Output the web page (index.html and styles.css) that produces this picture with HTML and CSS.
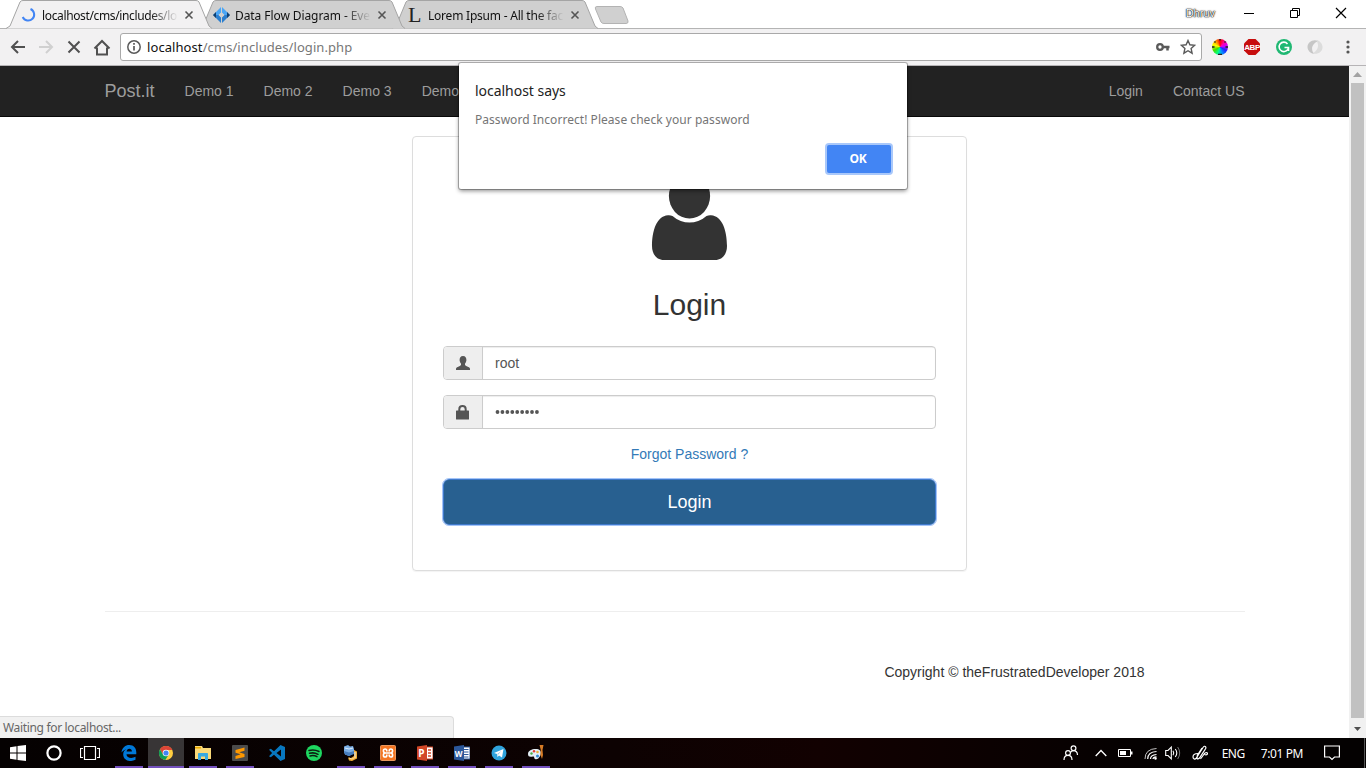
FILE: index.html
```html
<!DOCTYPE html>
<html lang="en">
<head>
<meta charset="utf-8">
<title>Login</title>
<link rel="stylesheet" href="styles.css">
</head>
<body>
<div class="screen">
  <header class="tabstrip">
    <div class="tab tab-active">
      <svg class="tab-shape" width="206" height="29"><path d="M0 28.5 L4 26 L14 2 Q15 .5 17 .5 H190 Q192 .5 193 2 L203 26 L206 28.5" fill="#f2f1f2" stroke="#a5a5a5"/></svg>
      <svg class="favicon" width="16" height="16" viewBox="0 0 16 16"><path d="M10 2A6 6 0 1 1 2.200 10" fill="none" stroke="#4285f4" stroke-width="2"/></svg>
      <span class="tab-title title-one">localhost/cms/includes/login.php</span>
      <svg class="tab-close" width="10" height="10"><path d="M1.500 1.500l7 7m0-7l-7 7" stroke="#555" stroke-width="1.600"/></svg>
    </div>
    <div class="tab tab-second">
      <svg class="tab-shape" width="206" height="29"><path d="M0 28.500L4 26L14 2Q15 .5 17 .5H190Q192 .5 193 2L203 26L206 28.500" fill="#d0d0d0" stroke="#a5a5a5"/></svg>
      <svg class="favicon" width="17" height="16" viewBox="0 0 17 16"><path d="M3 5L8 0v5.500L5.500 8H0zM14 5L9 0v5.500L11.500 8H17z" fill="#4ba6f5"/><path d="M3 11l5 5v-5.500L5.500 8H0zM14 11l-5 5v-5.500L11.500 8H17z" fill="#2c7fcf"/><path d="M0 8l3-3v6zM17 8l-3-3v6z" fill="#12406f"/><path d="M8.500 5.500L11 8l-2.500 2.500L6 8z" fill="#d0d0d0"/></svg>
      <span class="tab-title title-two">Data Flow Diagram - Everything</span>
      <svg class="tab-close" width="10" height="10"><path d="M1.500 1.500l7 7m0-7l-7 7" stroke="#555" stroke-width="1.600"/></svg>
    </div>
    <div class="tab">
      <svg class="tab-shape" width="206" height="29"><path d="M0 28.500L4 26L14 2Q15 .5 17 .5H190Q192 .5 193 2L203 26L206 28.500" fill="#d0d0d0" stroke="#a5a5a5"/></svg>
      <span class="favicon letter">L</span>
      <span class="tab-title title-three">Lorem Ipsum - All the facts</span>
      <svg class="tab-close" width="10" height="10"><path d="M1.500 1.500l7 7m0-7l-7 7" stroke="#555" stroke-width="1.600"/></svg>
    </div>
    <svg class="new-tab" width="36" height="18"><path d="M3 .5H26Q28 .5 29 2L34 15Q34.500 17.500 32 17.500H10Q8 17.500 7 16L1.500 3Q.5 .5 3 .5Z" fill="#d0d0d0" stroke="#b3b3b3"/></svg>
    <div class="window-controls">
      <span class="profile">Dhruv</span>
      <svg width="12" height="12"><path d="M1 6.500h10" stroke="#000"/></svg>
      <svg width="12" height="12"><path d="M1.500 3.500h7v7h-7zM3.500 3.500v-2h7v7h-2" fill="none" stroke="#000"/></svg>
      <svg width="12" height="12"><path d="M1 1l10 10M11 1L1 11" stroke="#000" stroke-width="1.200"/></svg>
    </div>
  </header>

  <div class="toolbar">
    <svg width="16" height="16"><path d="M15 8H2M8 2L2 8l6 6" fill="none" stroke="#505050" stroke-width="2"/></svg>
    <svg width="16" height="16"><path d="M1 8h13M8 2l6 6-6 6" fill="none" stroke="#d0d0d0" stroke-width="2"/></svg>
    <svg width="16" height="16"><path d="M2.500 2.500l11 11m0-11l-11 11" stroke="#505050" stroke-width="2"/></svg>
    <svg class="home" width="18" height="17"><path d="M1.500 9.500L9 2l7.500 7.500M4 8.500v7h10v-7" fill="none" stroke="#505050" stroke-width="2"/></svg>
    <div class="address">
      <svg width="16" height="16"><circle cx="8" cy="8" r="6.200" fill="none" stroke="#5a5a5a" stroke-width="1.500"/><path d="M8 7v4.500M8 4v1.700" stroke="#5a5a5a" stroke-width="1.700"/></svg>
      <span class="url"><b>localhost</b>/cms/includes/login.php</span>
      <svg class="key" width="16" height="12"><circle cx="5" cy="6" r="2.800" fill="none" stroke="#5a5a5a" stroke-width="2.300"/><path d="M8 6h6.500M12.500 6v3.500" fill="none" stroke="#5a5a5a" stroke-width="2.500"/></svg>
      <svg width="16" height="16"><path d="M8 1.500l1.900 4.300 4.800.5-3.600 3.200 1 4.700L8 11.700l-4.100 2.500 1-4.700L1.300 6.300l4.800-.5z" fill="none" stroke="#5a5a5a" stroke-width="1.400"/></svg>
    </div>
    <div class="extensions">
      <span class="wheel"><svg width="16" height="16"><path d="M0 8h2.500M13.500 8H16M8 0v1.500M2.500 2.500l1 1M13.500 2.500l-1 1M6 15.500h4" stroke="#222" stroke-width="1.500"/></svg></span>
      <svg width="18" height="18"><path d="M5.500 1h7L17 5.500v7L12.500 17h-7L1 12.500v-7z" fill="#c70d0d"/><text x="9" y="11.900" text-anchor="middle" class="abp">ABP</text></svg>
      <svg width="16" height="16"><circle cx="8" cy="8" r="8" fill="#20b873"/><path d="M11.500 4.900A4.700 4.700 0 1 0 12.500 8.500H8.500M12.500 8.500v3.500" fill="none" stroke="#fff" stroke-width="1.600"/></svg>
      <svg width="16" height="16"><path d="M11.500 2C6-.5.5 3 .5 8c0 3.500 3 6.500 7 7-3.500-3-4-10 4-13z" fill="#c6c6c6"/><path d="M5 14.500c6 1.500 11-2 10.500-7C15 4 12.500 1.500 9 1c3 3.500 3.500 10.500-4 13.500z" fill="#dcdcdc"/></svg>
      <svg class="menu" width="4" height="16"><circle cx="2" cy="3" r="1.600" fill="#555"/><circle cx="2" cy="8" r="1.600" fill="#555"/><circle cx="2" cy="13" r="1.600" fill="#555"/></svg>
    </div>
  </div>

  <div class="viewport">
    <div class="page">
      <nav class="navbar">
        <div class="container nav-row">
          <a class="brand">Post.it</a>
          <a>Demo 1</a><a>Demo 2</a><a>Demo 3</a><a>Demo 4</a>
          <a class="nav-right">Login</a><a>Contact US</a>
        </div>
      </nav>
      <main class="container">
        <section class="panel">
          <svg class="avatar" width="77" height="92" viewBox="0 0 77 92"><ellipse cx="38.500" cy="27" rx="20.600" ry="22.500" fill="#333"/><path d="M17 46.200C18.500 46 20 46.300 21.500 47C32 55.800 45 55.800 55.500 47C57 46.300 58.500 46 60 46.200C71.500 47 76 62 76 77C76 85 71.500 91 64 91H13C5.500 91 1 85 1 77C1 62 5.500 47 17 46.200Z" fill="#333"/></svg>
          <h2>Login</h2>
          <div class="input-group">
            <span class="addon"><svg width="14" height="14"><path d="M7 0C4.500 0 3.600 1.700 3.600 4c0 1.500.7 2.700 1.500 3.700 0 1.300-.3 1.700-1.300 2.200C1.500 10.800 0 11.500 0 12.700V14h14v-1.300c0-1.200-1.500-1.900-3.800-2.800-1-.5-1.300-.9-1.300-2.200.8-1 1.500-2.200 1.500-3.700C10.400 1.700 9.500 0 7 0z" fill="#555"/></svg></span>
            <span class="field">root</span>
          </div>
          <div class="input-group">
            <span class="addon"><svg width="14" height="15"><path d="M3.300 6V4.200Q3.300 1 6.500 1T9.700 4.200V6" fill="none" stroke="#555" stroke-width="2"/><rect y="5.500" width="13" height="9" rx=".6" fill="#555"/></svg></span>
            <span class="field"><svg width="46" height="6"><path d="M2.500 3h41" stroke="#555" stroke-width="3.800" stroke-linecap="round" stroke-dasharray="0 4.930"/></svg></span>
          </div>
          <a class="forgot">Forgot Password ?</a>
          <button class="submit">Login</button>
        </section>
        <footer class="footer">Copyright © theFrustratedDeveloper 2018</footer>
      </main>
      <div class="status">Waiting for localhost...</div>
    </div>
    <div class="scrollbar">
      <svg width="17" height="17"><path d="M4 11l4.500-5 4.500 5z" fill="#a3a3a3"/></svg>
      <span class="thumb"></span>
      <svg width="17" height="20"><path d="M5 9h7l-3.500 4z" fill="#505050"/></svg>
    </div>
  </div>

  <div class="dialog">
    <div class="dialog-title">localhost says</div>
    <div class="dialog-text">Password Incorrect! Please check your password</div>
    <button class="ok">OK</button>
  </div>

  <div class="taskbar">
    <span class="sys"><svg width="16" height="16"><path d="M0 2.300L6.500 1.300V7.500H0zM7.500 1.100L16 0v7.500H7.500zM0 8.500h6.500v6.200L0 13.700zM7.500 8.500H16V16l-8.500-1.100z" fill="#fff"/></svg></span>
    <span class="sys"><svg width="16" height="16"><circle cx="8" cy="8" r="6.600" fill="none" stroke="#fff" stroke-width="2.200"/></svg></span>
    <span class="sys"><svg width="20" height="16"><path d="M4.500 1.500h11v13h-11zM3 3.500H.5v9H3M17 3.500h2.500v9H17" fill="none" stroke="#fff" stroke-width="1.200"/></svg></span>
    <span class="app running first"><svg width="16" height="16"><path d="M.5 7.500C1 2.500 4.500 0 8.200 0 13 0 15.300 3.500 15.300 7.300V9.200H5.500c.1 4 5.500 4.600 9 2.600v3C8.500 17.800 2.200 15 2.200 9.500c0-3 1.400-4.600 3.300-5.300C3.500 4.700 1.500 6 .5 7.500zM5.600 6.500h5.300C10.900 4.700 9.800 3.800 8.300 3.800 6.800 3.800 5.800 5 5.600 6.500z" fill="#0078d7"/></svg></span>
    <span class="app running current"><svg width="16" height="16"><circle cx="8" cy="8" r="7" fill="#ffcd40"/><path d="M2 4.300A7 7 0 0 1 14.300 5H8L5 9.700z" fill="#db4437"/><path d="M2 4.300A7 7 0 0 0 7.300 15L10.500 10 5 9.500z" fill="#0f9d58"/><circle cx="8" cy="8" r="3.300" fill="#fff"/><circle cx="8" cy="8" r="2.600" fill="#4285f4"/></svg></span>
    <span class="app running"><svg width="16" height="16"><path d="M0 1h7l1 2h8v11H0z" fill="#f9d978"/><path d="M0 2h6v1.500H0z" fill="#e8a900"/><path d="M3 15V8.500Q3 8 4 8h8q1 0 1 .5V15h-3v-3.500H6V15z" fill="#37a9e1"/></svg></span>
    <span class="app running"><svg width="16" height="16"><rect width="16" height="16" rx="1" fill="#4b4b4b"/><path d="M12.500 2.500v3.200L7.200 7.300l5.300 1.600v3L3.500 14v-3l5.200-1.800-5.200-1.500V4.900z" fill="#ff9800"/></svg></span>
    <span class="app"><svg width="16" height="16"><path d="M11.500 0L16 2v12l-4.500 2L5 9.700 1.800 12.300 0 11.300 3.100 8 0 4.700l1.800-1L5 6.300zM12 4.500L7.500 8l4.500 3.500z" fill="#0877bf"/></svg></span>
    <span class="app"><svg width="16" height="16"><circle cx="8" cy="8" r="8" fill="#1ed760"/><path d="M3 5.500q5-1.500 10 1M3.500 8.300q4.500-1.200 8.500 1M4 10.900q4-1 7 .8" fill="none" stroke="#0b1f11" stroke-width="1.500" stroke-linecap="round"/></svg></span>
    <span class="app running"><svg width="16" height="16"><path d="M1 1.500L5 0l2 1.500 3-.5 1 3v4L6 11 2 9.500 1 7z" fill="#7baee4"/><path d="M1 6l5 1.500L11 6v3l-5 2-4-1.500z" fill="#467dbe"/><path d="M11 5l3 1.500v7L9 16l-3-.5-1-3 3 .5 3-2z" fill="#efac35"/><path d="M2 3l4 1 4-1M12 7v5" stroke="#d8ecff" fill="none"/><path d="M6 13l3 1 4-2" stroke="#ffd993" fill="none"/></svg></span>
    <span class="app running"><svg width="16" height="16"><rect x=".5" y=".5" width="15" height="15" rx="1" fill="#f37623" stroke="#e8975e"/><path d="M6.800 6.500V5.800Q6.800 4 5.100 4T3.400 5.800Q3.400 8 5.500 8H10.500Q12.600 8 12.600 5.800 12.600 4 10.900 4T9.200 5.800V6.500M5.500 8Q3.400 8 3.400 10.200 3.400 12 5.100 12T6.800 10.200V9.500M10.500 8Q12.600 8 12.600 10.200 12.600 12 10.900 12T9.200 10.200V9.500" fill="none" stroke="#fff" stroke-width="1.600"/></svg></span>
    <span class="app running"><svg width="16" height="16"><path d="M7 2h9v12H7z" fill="#fff" stroke="#d24726"/><path d="M11 5h3M11 8h3M11 11h3" stroke="#d24726" stroke-width="1.300"/><path d="M0 1.500L10 0v16L0 14.500z" fill="#d24726"/><text class="office" x="1.300" y="12">P</text></svg></span>
    <span class="app running"><svg width="16" height="16"><path d="M7 2h9v12H7z" fill="#fff" stroke="#2b579a"/><path d="M10 4.500h4.500M10 7h4.500M10 9.500h4.500M10 12h4.500" stroke="#2b579a"/><path d="M0 1.500L10 0v16L0 14.500z" fill="#2b579a"/><text class="office word" x=".8" y="11.500">W</text></svg></span>
    <span class="app running"><svg width="16" height="16"><circle cx="8" cy="8" r="7.500" fill="#2fa3dc"/><path d="M3 8l9.500-4-1.500 8.500-3-2-1.500 1.500-.4-3z" fill="#fff"/><path d="M6.200 9l4-3-3 3.700" fill="#9bc6df"/></svg></span>
    <span class="app running"><svg width="16" height="16"><path d="M0 9C0 5 5 3.500 9 4c3.500.5 4.500 3 3.500 6-1 3.500-4 5-5.500 4-1.500-1 0-2.500-2-2.500C2 12 0 12 0 9z" fill="#e4eef5"/><circle cx="3.500" cy="8.500" r="1.200" fill="#49ad47"/><circle cx="6" cy="6.300" r="1.200" fill="#e23b32"/><circle cx="9.500" cy="7" r="1.300" fill="#ebb53a"/><circle cx="9.500" cy="11" r="1.500" fill="#3289d5"/><path d="M11.500 0h4l-1 5 .5 5-1 4-1.500-4 .3-5z" fill="#d77b25"/></svg></span>
    <div class="tray">
      <svg width="16" height="16"><g fill="none" stroke="#fff" stroke-width="1.200"><circle cx="10.500" cy="3.300" r="2.400"/><circle cx="5" cy="8" r="2.400"/><path d="M1 15q0-4.600 4-4.600T9 15M7.500 7.500Q8.500 5.700 10.500 5.700 14.300 5.700 14.500 10"/></g></svg>
      <svg width="12" height="16"><path d="M.7 11L6 5.500l5.300 5.500" fill="none" stroke="#fff" stroke-width="1.300"/></svg>
      <svg width="16" height="16"><path d="M1.500 4.500h12v7h-12z" fill="none" stroke="#fff"/><path d="M3 6h6v4H3zM14 6.500h1.500v3H14z" fill="#fff"/></svg>
      <svg width="14" height="16"><g fill="none" stroke="#fff"><path d="M1 14Q1 4 12.500 3.500" opacity=".75"/><path d="M3.700 14q0-7 8.800-7.500M6.500 14q0-4 6-4.500M9 14q0-2 3.500-2.200" stroke-width="1.200"/></g><circle cx="11.500" cy="13.500" r="1.200" fill="#fff"/></svg>
      <svg width="16" height="16"><path d="M.7 5.500H3l3.300-3.300v11.600L3 10.500H.7z" fill="none" stroke="#fff" stroke-width="1.100"/><path d="M8 5.800q1.500 2.200 0 4.400M10.300 4q3 4 0 8" fill="none" stroke="#fff" stroke-width="1.100"/><path d="M12.700 2q4 6 0 12" fill="none" stroke="#777"/></svg>
      <svg width="16" height="16"><path d="M6 8.500C2 8.500 1 10 1 12s2 2.500 3 1.500l7-11q1.500-2 2.500-.8t-.5 3L7.500 13q-1.500 1.500-2.500.5l.3-3L10 3M8.500 14q3-4 4-5.500 2.500-2 3 0-.5 2-3 1" fill="none" stroke="#fff" stroke-width="1.200"/></svg>
      <span class="lang">ENG</span>
      <span class="clock">7:01 PM</span>
      <svg width="16" height="16"><path d="M.6 1h14.800v11H10.500L8 14.500 5.500 12H.6z" fill="none" stroke="#fff" stroke-width="1.200"/></svg>
    </div>
  </div>
</div>
</body>
</html>
```
FILE: styles.css
```css
* { box-sizing: border-box; }
body { margin: 0; overflow: hidden; }
svg { display: block; flex: none; }
.screen {
  position: relative;
  display: flex;
  flex-direction: column;
  width: 1366px;
  height: 768px;
  background: #fff;
  font-family: "Noto Sans", "Open Sans", sans-serif;
}

/* browser tabs */
.tabstrip {
  display: flex;
  height: 29px;
  flex: none;
  padding-left: 6px;
  border-bottom: 1px solid #b4b4b4;
}
.tab {
  position: relative;
  display: flex;
  align-items: center;
  width: 206px;
  height: 29px;
  margin-right: -13px;
  padding: 1px 18px 0 14px;
  flex: none;
}
.tab-second { z-index: 1; }
.tab-active { z-index: 2; }
.tab-shape { position: absolute; left: 0; top: 0; }
.favicon, .tab-title, .tab-close { position: relative; }
.favicon { width: 17px; flex: none; }
.letter { padding-left: 2px; font: 22px/24px "Liberation Serif", serif; color: #222; }
.tab-title {
  width: 135px;
  margin-left: 5px;
  margin-right: 7px;
  overflow: hidden;
  white-space: nowrap;
  font-size: 12px;
  color: #111;
  mask-image: linear-gradient(to right, #000 108px, transparent 136px);
}
.title-one { letter-spacing: -0.36px; }
.title-two { letter-spacing: -0.08px; }
.title-three { letter-spacing: -0.22px; }
.new-tab { margin: 6px 0 0 9px; }
.window-controls {
  display: flex;
  align-items: center;
  gap: 34px;
  height: 26px;
  margin-left: auto;
  padding-right: 19px;
}
.profile {
  margin-right: -6px;
  font: 11px/14px "Liberation Sans", Arial, sans-serif;
  color: #fff;
  text-shadow: 0 0 1px #000, 0 0 1px #000, 0 0 2px #333;
}

/* address bar */
.toolbar {
  display: flex;
  align-items: center;
  gap: 12px;
  height: 37px;
  flex: none;
  padding: 0 16px 0 10px;
  background: #f2f1f2;
  border-bottom: 1px solid #b6b4b6;
}
.home { margin-left: -1px; }
.address {
  display: flex;
  align-items: center;
  width: 1082px;
  height: 28px;
  flex: none;
  margin: 0 0 0 -3px;
  padding: 0 5px;
  background: #fff;
  border: 1px solid #a9a9a9;
  border-radius: 3px;
}
.url { margin-left: 5px; font-size: 13px; letter-spacing: 0.08px; color: #777; }
.url b { font-weight: normal; color: #111; }
.key { margin-left: auto; margin-right: 9px; }
.extensions { display: flex; align-items: center; gap: 15px; margin-left: -2px; }
.menu { margin-left: 8px; }
.wheel {
  width: 16px;
  height: 16px;
  border-radius: 50%;
  background: conic-gradient(#f00, #f0a 45deg, #c0f 80deg, #22f 120deg, #09f 165deg, #0f8 200deg, #4d0 240deg, #ff0 290deg, #f80 330deg, #f00);
}
.abp { font: bold 8px "Liberation Sans", Arial, sans-serif; letter-spacing: -0.4px; fill: #fff; }

/* web page */
.viewport { display: flex; height: 672px; flex: none; }
.page {
  position: relative;
  width: 1349px;
  font: 14px/20px "Liberation Sans", Arial, sans-serif;
  color: #333;
}
.container { width: 1170px; margin: 0 auto; padding: 0 15px; }
.navbar { height: 51px; background: #222; border-bottom: 1px solid #080808; color: #9d9d9d; }
.nav-row { display: flex; padding: 0; }
.nav-row a { padding: 15px; }
.nav-row .brand { font-size: 18px; }
.nav-right { margin-left: auto; }
.panel {
  width: 555px;
  height: 435px;
  margin: 19px 0 0 307.5px;
  padding: 32px 30px 0;
  border: 1px solid #ddd;
  border-radius: 4px;
  box-shadow: 0 1px 1px rgba(0, 0, 0, 0.05);
}
.avatar { margin: 0 auto; }
h2 { margin: 27px 0 25px; font-size: 30px; line-height: 33px; font-weight: normal; text-align: center; }
.input-group {
  display: flex;
  height: 34px;
  margin-bottom: 15px;
  border: 1px solid #ccc;
  border-radius: 4px;
  overflow: hidden;
  color: #555;
}
.addon {
  display: flex;
  align-items: center;
  justify-content: center;
  width: 39px;
  background: #eee;
  border-right: 1px solid #ccc;
}
.field {
  display: flex;
  align-items: center;
  flex: 1;
  padding-left: 12px;
  box-shadow: inset 0 1px 1px rgba(0, 0, 0, 0.075);
}
.forgot { display: block; text-align: center; color: #337ab7; }
.submit {
  display: block;
  width: 100%;
  height: 46px;
  margin-top: 15px;
  padding: 0;
  font: 18px/24px "Liberation Sans", Arial, sans-serif;
  color: #fff;
  background: #286090;
  border: 1px solid #3f79cb;
  border-radius: 6px;
  outline: 1px solid #a3c4f8;
}
.footer {
  margin-top: 40px;
  padding: 50px 100px 0 0;
  border-top: 1px solid #eee;
  text-align: right;
}
.status {
  position: absolute;
  left: 0;
  bottom: 0;
  width: 454px;
  height: 22px;
  padding-left: 3px;
  background: #f1f1f1;
  border: solid #dcdcdc;
  border-width: 1px 1px 0 0;
  border-top-right-radius: 4px;
  font: 12px/22px "Noto Sans", sans-serif;
  letter-spacing: -0.33px;
  color: #666;
}
.scrollbar { display: flex; flex-direction: column; width: 17px; background: #f1f1f1; }
.thumb { flex: 1; margin: 0 2px; background: #c1c1c1; }

/* alert over the page */
.dialog {
  position: absolute;
  left: 459px;
  top: 63px;
  z-index: 5;
  width: 448px;
  height: 126px;
  padding: 18px 16px;
  background: #fff;
  border-radius: 2px;
  box-shadow: 0 0 0 1px rgba(0, 0, 0, 0.25), 0 2px 4px rgba(0, 0, 0, 0.45);
}
.dialog-title { font-size: 14px; line-height: 20px; letter-spacing: -0.03px; color: #222; }
.dialog-text { margin-top: 10px; font-size: 12px; line-height: 18px; letter-spacing: 0.04px; color: #757575; }
.ok {
  display: block;
  width: 64px;
  height: 28px;
  margin: 16px 0 0 auto;
  padding: 0 2px 0 0;
  background: #4285f4;
  border: 0;
  border-radius: 2px;
  box-shadow: 0 0 0 2px #a9c8fa;
  font: bold 12px/28px "Open Sans", sans-serif;
  letter-spacing: -0.3px;
  color: #fff;
}

/* taskbar */
.taskbar { display: flex; height: 30px; background: linear-gradient(90deg, #050101, #0d0202 45%, #120101 60%, #040101 85%); }
.sys, .app { display: flex; align-items: center; justify-content: center; flex: none; }
.sys { width: 36px; }
.app { position: relative; width: 36px; margin-right: 1px; }
.first { margin-left: 3px; }
.running::after {
  content: "";
  position: absolute;
  bottom: 0;
  left: 4px;
  width: 28px;
  height: 2px;
  background: #7350bd;
}
.current { background: #383536; }
.current::after { left: 0; width: 36px; }
.office { font: bold 10px "Open Sans", sans-serif; fill: #fff; }
.word { font-size: 8px; }
.tray {
  display: flex;
  align-items: center;
  margin-left: auto;
  padding-right: 24px;
  border-right: 1px solid #555;
  margin-right: 1px;
  gap: 11px;
  font-size: 12px;
  color: #fff;
}
.tray > :nth-child(2) { margin-left: 5px; }
.tray > :nth-child(3) { margin-left: -1px; }
.tray > :nth-child(5) { margin-left: -4px; }
.lang { margin-left: 3px; letter-spacing: -0.5px; }
.clock { margin: 0 10px 0 5px; letter-spacing: -0.4px; }
```
